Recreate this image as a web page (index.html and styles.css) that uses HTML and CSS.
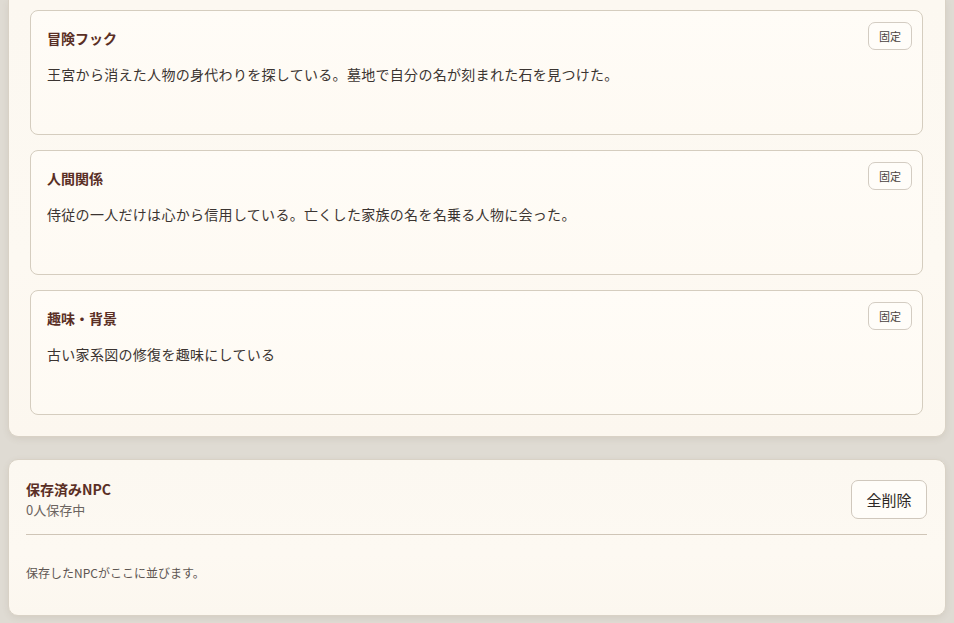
FILE: index.html
```html
<!DOCTYPE html>
<html lang="ja">
<head>
<meta charset="utf-8">
<title>NPC</title>
<link rel="stylesheet" href="styles.css">
</head>
<body>
<section class="panel panel-top">
  <article class="card">
    <div class="card-head">
      <h3 class="card-title">冒険フック</h3>
      <button class="pin">固定</button>
    </div>
    <p class="card-text">王宮から消えた人物の身代わりを探している。墓地で自分の名が刻まれた石を見つけた。</p>
  </article>
  <article class="card">
    <div class="card-head">
      <h3 class="card-title">人間関係</h3>
      <button class="pin">固定</button>
    </div>
    <p class="card-text">侍従の一人だけは心から信用している。亡くした家族の名を名乗る人物に会った。</p>
  </article>
  <article class="card">
    <div class="card-head">
      <h3 class="card-title">趣味・背景</h3>
      <button class="pin">固定</button>
    </div>
    <p class="card-text">古い家系図の修復を趣味にしている</p>
  </article>
</section>
<section class="panel panel-saved">
  <div class="saved-head">
    <div class="saved-info">
      <h2 class="saved-title">保存済みNPC</h2>
      <p class="saved-count">0人保存中</p>
    </div>
    <button class="clear">全削除</button>
  </div>
  <p class="saved-empty">保存したNPCがここに並びます。</p>
</section>
</body>
</html>
```
FILE: styles.css
```css
html, body {
  margin: 0;
  padding: 0;
}
body {
  background: #dfdbd3;
  padding: 0 8px 8px;
  font-family: "Noto Sans CJK JP", "Noto Sans", sans-serif;
  color: #3b3431;
}
h2, h3, p { margin: 0; }
button { font-family: inherit; cursor: pointer; }

.panel {
  background: linear-gradient(180deg, #fcf8f1 0%, #fdf9f2 60%, #fcf7ef 100%);
  border: 1px solid #d9d2c6;
  box-shadow: 0 2px 6px rgba(120, 105, 85, 0.12);
}
.panel-top {
  border-top: none;
  border-radius: 0 0 10px 10px;
  padding: 10px 22px 21px 21px;
  display: flex;
  flex-direction: column;
  gap: 15px;
}
.card {
  box-sizing: border-box;
  height: 125px;
  background: linear-gradient(180deg, #fffcf7 0%, #fefaf3 100%);
  border: 1px solid #d5cdbf;
  border-radius: 8px;
  padding: 11px 10px 0 16px;
}
.card-head {
  display: flex;
  justify-content: space-between;
  align-items: flex-start;
}
.card-title {
  margin-top: 6px;
  font-size: 14px;
  line-height: 20px;
  font-weight: 700;
  color: #5a2f25;
}
.pin {
  width: 44px;
  height: 28px;
  padding: 0;
  font-size: 11px;
  color: #4a4340;
  background: #fffdf9;
  border: 1px solid #d3ccc2;
  border-radius: 7px;
}
.card-text {
  margin-top: 13px;
  font-size: 14px;
  line-height: 22px;
  letter-spacing: 0.3px;
  color: #3b3431;
}

.panel-saved {
  margin-top: 22px;
  border-radius: 10px;
  padding: 20px 18px 33px 17px;
}
.saved-head {
  display: flex;
  justify-content: space-between;
  align-items: flex-start;
  padding-bottom: 15px;
  border-bottom: 1px solid #cfc5b7;
}
.saved-title {
  font-size: 14px;
  line-height: 20px;
  font-weight: 700;
  color: #5a2f25;
  margin-top: -1px;
}
.saved-count {
  margin-top: 2px;
  font-size: 13px;
  line-height: 18px;
  color: #6c6460;
}
.clear {
  width: 76px;
  height: 39px;
  padding: 0;
  font-size: 15px;
  color: #2e2926;
  background: #fffdf9;
  border: 1px solid #d0c8bd;
  border-radius: 7px;
}
.saved-empty {
  margin-top: 29px;
  font-size: 12px;
  line-height: 18px;
  color: #5e5652;
}
```
